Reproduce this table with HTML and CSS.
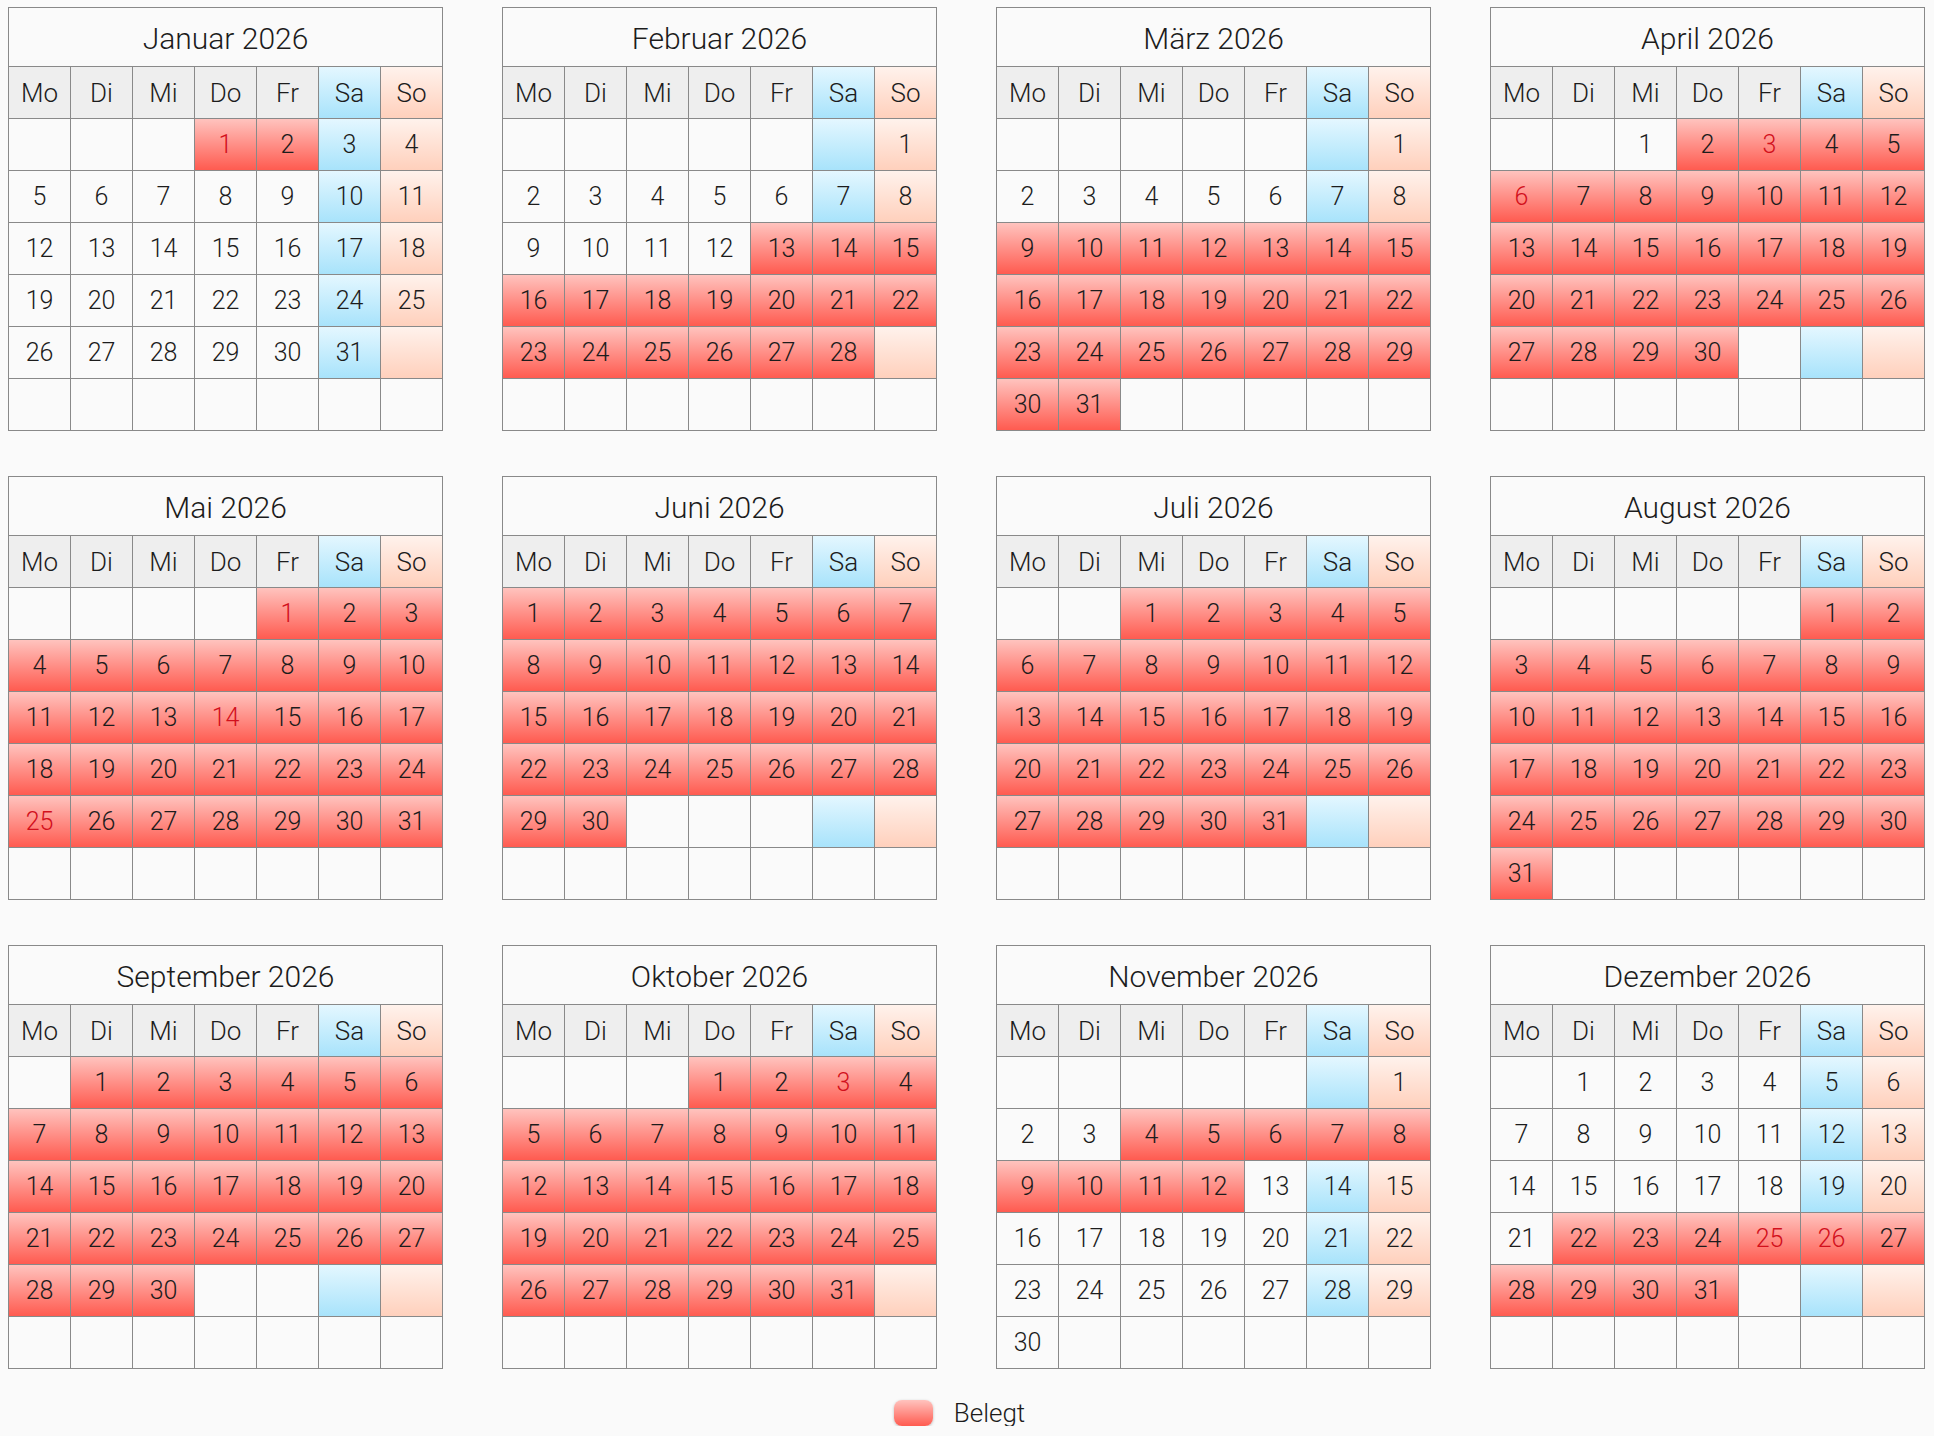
FILE: index.html
```html
<!DOCTYPE html>
<html lang="de">
<head>
<meta charset="utf-8">
<title>Belegungskalender 2026</title>
<link rel="stylesheet" href="styles.css">
</head>
<body>
<div class="year">

<div class="cal">
<h2 class="title">Januar 2026</h2>
<span class="wd">Mo</span><span class="wd">Di</span><span class="wd">Mi</span><span class="wd">Do</span><span class="wd">Fr</span><span class="wd sa">Sa</span><span class="wd so">So</span>
<span></span><span></span><span></span><span class="b h">1</span><span class="b">2</span><span class="sa">3</span><span class="so">4</span>
<span>5</span><span>6</span><span>7</span><span>8</span><span>9</span><span class="sa">10</span><span class="so">11</span>
<span>12</span><span>13</span><span>14</span><span>15</span><span>16</span><span class="sa">17</span><span class="so">18</span>
<span>19</span><span>20</span><span>21</span><span>22</span><span>23</span><span class="sa">24</span><span class="so">25</span>
<span>26</span><span>27</span><span>28</span><span>29</span><span>30</span><span class="sa">31</span><span class="so"></span>
<span></span><span></span><span></span><span></span><span></span><span></span><span></span>
</div>

<div class="cal">
<h2 class="title">Februar 2026</h2>
<span class="wd">Mo</span><span class="wd">Di</span><span class="wd">Mi</span><span class="wd">Do</span><span class="wd">Fr</span><span class="wd sa">Sa</span><span class="wd so">So</span>
<span></span><span></span><span></span><span></span><span></span><span class="sa"></span><span class="so">1</span>
<span>2</span><span>3</span><span>4</span><span>5</span><span>6</span><span class="sa">7</span><span class="so">8</span>
<span>9</span><span>10</span><span>11</span><span>12</span><span class="b">13</span><span class="b">14</span><span class="b">15</span>
<span class="b">16</span><span class="b">17</span><span class="b">18</span><span class="b">19</span><span class="b">20</span><span class="b">21</span><span class="b">22</span>
<span class="b">23</span><span class="b">24</span><span class="b">25</span><span class="b">26</span><span class="b">27</span><span class="b">28</span><span class="so"></span>
<span></span><span></span><span></span><span></span><span></span><span></span><span></span>
</div>

<div class="cal">
<h2 class="title">März 2026</h2>
<span class="wd">Mo</span><span class="wd">Di</span><span class="wd">Mi</span><span class="wd">Do</span><span class="wd">Fr</span><span class="wd sa">Sa</span><span class="wd so">So</span>
<span></span><span></span><span></span><span></span><span></span><span class="sa"></span><span class="so">1</span>
<span>2</span><span>3</span><span>4</span><span>5</span><span>6</span><span class="sa">7</span><span class="so">8</span>
<span class="b">9</span><span class="b">10</span><span class="b">11</span><span class="b">12</span><span class="b">13</span><span class="b">14</span><span class="b">15</span>
<span class="b">16</span><span class="b">17</span><span class="b">18</span><span class="b">19</span><span class="b">20</span><span class="b">21</span><span class="b">22</span>
<span class="b">23</span><span class="b">24</span><span class="b">25</span><span class="b">26</span><span class="b">27</span><span class="b">28</span><span class="b">29</span>
<span class="b">30</span><span class="b">31</span><span></span><span></span><span></span><span></span><span></span>
</div>

<div class="cal">
<h2 class="title">April 2026</h2>
<span class="wd">Mo</span><span class="wd">Di</span><span class="wd">Mi</span><span class="wd">Do</span><span class="wd">Fr</span><span class="wd sa">Sa</span><span class="wd so">So</span>
<span></span><span></span><span>1</span><span class="b">2</span><span class="b h">3</span><span class="b">4</span><span class="b">5</span>
<span class="b h">6</span><span class="b">7</span><span class="b">8</span><span class="b">9</span><span class="b">10</span><span class="b">11</span><span class="b">12</span>
<span class="b">13</span><span class="b">14</span><span class="b">15</span><span class="b">16</span><span class="b">17</span><span class="b">18</span><span class="b">19</span>
<span class="b">20</span><span class="b">21</span><span class="b">22</span><span class="b">23</span><span class="b">24</span><span class="b">25</span><span class="b">26</span>
<span class="b">27</span><span class="b">28</span><span class="b">29</span><span class="b">30</span><span></span><span class="sa"></span><span class="so"></span>
<span></span><span></span><span></span><span></span><span></span><span></span><span></span>
</div>

<div class="cal">
<h2 class="title">Mai 2026</h2>
<span class="wd">Mo</span><span class="wd">Di</span><span class="wd">Mi</span><span class="wd">Do</span><span class="wd">Fr</span><span class="wd sa">Sa</span><span class="wd so">So</span>
<span></span><span></span><span></span><span></span><span class="b h">1</span><span class="b">2</span><span class="b">3</span>
<span class="b">4</span><span class="b">5</span><span class="b">6</span><span class="b">7</span><span class="b">8</span><span class="b">9</span><span class="b">10</span>
<span class="b">11</span><span class="b">12</span><span class="b">13</span><span class="b h">14</span><span class="b">15</span><span class="b">16</span><span class="b">17</span>
<span class="b">18</span><span class="b">19</span><span class="b">20</span><span class="b">21</span><span class="b">22</span><span class="b">23</span><span class="b">24</span>
<span class="b h">25</span><span class="b">26</span><span class="b">27</span><span class="b">28</span><span class="b">29</span><span class="b">30</span><span class="b">31</span>
<span></span><span></span><span></span><span></span><span></span><span></span><span></span>
</div>

<div class="cal">
<h2 class="title">Juni 2026</h2>
<span class="wd">Mo</span><span class="wd">Di</span><span class="wd">Mi</span><span class="wd">Do</span><span class="wd">Fr</span><span class="wd sa">Sa</span><span class="wd so">So</span>
<span class="b">1</span><span class="b">2</span><span class="b">3</span><span class="b">4</span><span class="b">5</span><span class="b">6</span><span class="b">7</span>
<span class="b">8</span><span class="b">9</span><span class="b">10</span><span class="b">11</span><span class="b">12</span><span class="b">13</span><span class="b">14</span>
<span class="b">15</span><span class="b">16</span><span class="b">17</span><span class="b">18</span><span class="b">19</span><span class="b">20</span><span class="b">21</span>
<span class="b">22</span><span class="b">23</span><span class="b">24</span><span class="b">25</span><span class="b">26</span><span class="b">27</span><span class="b">28</span>
<span class="b">29</span><span class="b">30</span><span></span><span></span><span></span><span class="sa"></span><span class="so"></span>
<span></span><span></span><span></span><span></span><span></span><span></span><span></span>
</div>

<div class="cal">
<h2 class="title">Juli 2026</h2>
<span class="wd">Mo</span><span class="wd">Di</span><span class="wd">Mi</span><span class="wd">Do</span><span class="wd">Fr</span><span class="wd sa">Sa</span><span class="wd so">So</span>
<span></span><span></span><span class="b">1</span><span class="b">2</span><span class="b">3</span><span class="b">4</span><span class="b">5</span>
<span class="b">6</span><span class="b">7</span><span class="b">8</span><span class="b">9</span><span class="b">10</span><span class="b">11</span><span class="b">12</span>
<span class="b">13</span><span class="b">14</span><span class="b">15</span><span class="b">16</span><span class="b">17</span><span class="b">18</span><span class="b">19</span>
<span class="b">20</span><span class="b">21</span><span class="b">22</span><span class="b">23</span><span class="b">24</span><span class="b">25</span><span class="b">26</span>
<span class="b">27</span><span class="b">28</span><span class="b">29</span><span class="b">30</span><span class="b">31</span><span class="sa"></span><span class="so"></span>
<span></span><span></span><span></span><span></span><span></span><span></span><span></span>
</div>

<div class="cal">
<h2 class="title">August 2026</h2>
<span class="wd">Mo</span><span class="wd">Di</span><span class="wd">Mi</span><span class="wd">Do</span><span class="wd">Fr</span><span class="wd sa">Sa</span><span class="wd so">So</span>
<span></span><span></span><span></span><span></span><span></span><span class="b">1</span><span class="b">2</span>
<span class="b">3</span><span class="b">4</span><span class="b">5</span><span class="b">6</span><span class="b">7</span><span class="b">8</span><span class="b">9</span>
<span class="b">10</span><span class="b">11</span><span class="b">12</span><span class="b">13</span><span class="b">14</span><span class="b">15</span><span class="b">16</span>
<span class="b">17</span><span class="b">18</span><span class="b">19</span><span class="b">20</span><span class="b">21</span><span class="b">22</span><span class="b">23</span>
<span class="b">24</span><span class="b">25</span><span class="b">26</span><span class="b">27</span><span class="b">28</span><span class="b">29</span><span class="b">30</span>
<span class="b">31</span><span></span><span></span><span></span><span></span><span></span><span></span>
</div>

<div class="cal">
<h2 class="title">September 2026</h2>
<span class="wd">Mo</span><span class="wd">Di</span><span class="wd">Mi</span><span class="wd">Do</span><span class="wd">Fr</span><span class="wd sa">Sa</span><span class="wd so">So</span>
<span></span><span class="b">1</span><span class="b">2</span><span class="b">3</span><span class="b">4</span><span class="b">5</span><span class="b">6</span>
<span class="b">7</span><span class="b">8</span><span class="b">9</span><span class="b">10</span><span class="b">11</span><span class="b">12</span><span class="b">13</span>
<span class="b">14</span><span class="b">15</span><span class="b">16</span><span class="b">17</span><span class="b">18</span><span class="b">19</span><span class="b">20</span>
<span class="b">21</span><span class="b">22</span><span class="b">23</span><span class="b">24</span><span class="b">25</span><span class="b">26</span><span class="b">27</span>
<span class="b">28</span><span class="b">29</span><span class="b">30</span><span></span><span></span><span class="sa"></span><span class="so"></span>
<span></span><span></span><span></span><span></span><span></span><span></span><span></span>
</div>

<div class="cal">
<h2 class="title">Oktober 2026</h2>
<span class="wd">Mo</span><span class="wd">Di</span><span class="wd">Mi</span><span class="wd">Do</span><span class="wd">Fr</span><span class="wd sa">Sa</span><span class="wd so">So</span>
<span></span><span></span><span></span><span class="b">1</span><span class="b">2</span><span class="b h">3</span><span class="b">4</span>
<span class="b">5</span><span class="b">6</span><span class="b">7</span><span class="b">8</span><span class="b">9</span><span class="b">10</span><span class="b">11</span>
<span class="b">12</span><span class="b">13</span><span class="b">14</span><span class="b">15</span><span class="b">16</span><span class="b">17</span><span class="b">18</span>
<span class="b">19</span><span class="b">20</span><span class="b">21</span><span class="b">22</span><span class="b">23</span><span class="b">24</span><span class="b">25</span>
<span class="b">26</span><span class="b">27</span><span class="b">28</span><span class="b">29</span><span class="b">30</span><span class="b">31</span><span class="so"></span>
<span></span><span></span><span></span><span></span><span></span><span></span><span></span>
</div>

<div class="cal">
<h2 class="title">November 2026</h2>
<span class="wd">Mo</span><span class="wd">Di</span><span class="wd">Mi</span><span class="wd">Do</span><span class="wd">Fr</span><span class="wd sa">Sa</span><span class="wd so">So</span>
<span></span><span></span><span></span><span></span><span></span><span class="sa"></span><span class="so">1</span>
<span>2</span><span>3</span><span class="b">4</span><span class="b">5</span><span class="b">6</span><span class="b">7</span><span class="b">8</span>
<span class="b">9</span><span class="b">10</span><span class="b">11</span><span class="b">12</span><span>13</span><span class="sa">14</span><span class="so">15</span>
<span>16</span><span>17</span><span>18</span><span>19</span><span>20</span><span class="sa">21</span><span class="so">22</span>
<span>23</span><span>24</span><span>25</span><span>26</span><span>27</span><span class="sa">28</span><span class="so">29</span>
<span>30</span><span></span><span></span><span></span><span></span><span></span><span></span>
</div>

<div class="cal">
<h2 class="title">Dezember 2026</h2>
<span class="wd">Mo</span><span class="wd">Di</span><span class="wd">Mi</span><span class="wd">Do</span><span class="wd">Fr</span><span class="wd sa">Sa</span><span class="wd so">So</span>
<span></span><span>1</span><span>2</span><span>3</span><span>4</span><span class="sa">5</span><span class="so">6</span>
<span>7</span><span>8</span><span>9</span><span>10</span><span>11</span><span class="sa">12</span><span class="so">13</span>
<span>14</span><span>15</span><span>16</span><span>17</span><span>18</span><span class="sa">19</span><span class="so">20</span>
<span>21</span><span class="b">22</span><span class="b">23</span><span class="b">24</span><span class="b h">25</span><span class="b h">26</span><span class="b">27</span>
<span class="b">28</span><span class="b">29</span><span class="b">30</span><span class="b">31</span><span></span><span class="sa"></span><span class="so"></span>
<span></span><span></span><span></span><span></span><span></span><span></span><span></span>
</div>

</div>

<div class="legend">
<span class="swatch"></span>
<span class="legend-label">Belegt</span>
</div>
</body>
</html>
```
FILE: styles.css
```css
html, body {
  margin: 0;
  background: #fafafa;
}

body {
  width: 1917px;
  padding: 7px 0 0 8px;
  font-family: Roboto, "Liberation Sans", sans-serif;
  font-weight: 300;
  color: #1c1c1c;
}

.year {
  display: grid;
  grid-template-columns: repeat(4, 435px);
  justify-content: space-between;
  row-gap: 45px;
}

.cal {
  display: grid;
  grid-template-columns: repeat(7, 61px);
  grid-template-rows: 58px repeat(7, 51px);
  gap: 1px;
  padding: 1px;
  background: #898989;
}

.title {
  grid-column: 1 / -1;
  margin: 0;
  display: flex;
  align-items: center;
  justify-content: center;
  background: #fafafa;
  font-size: 30px;
  font-weight: 300;
  padding-top: 2px;
}

.cal span {
  display: flex;
  align-items: center;
  justify-content: center;
  background: #fafafa;
  font-size: 25px;
  line-height: 1;
}

.cal .wd {
  background: #eeeeee;
  font-size: 26px;
}

.cal .sa {
  background: linear-gradient(#e4f7ff, #a8e3fb);
}

.cal .so {
  background: linear-gradient(#fff2ec, #ffd0bc);
}

.cal .b {
  background: linear-gradient(#ffc3be, #ff5b50);
}

.cal .h {
  color: #d2101c;
}

.legend {
  display: flex;
  align-items: center;
  justify-content: center;
  margin-top: 31px;
  padding-right: 14px;
}

.swatch {
  width: 39px;
  height: 26px;
  border-radius: 8px;
  background: linear-gradient(#ffc3be, #ff5b50);
  box-shadow: 0 1px 3px rgba(0, 0, 0, 0.25);
  margin-right: 21px;
}

.legend-label {
  font-size: 26px;
  line-height: 26px;
}
```
